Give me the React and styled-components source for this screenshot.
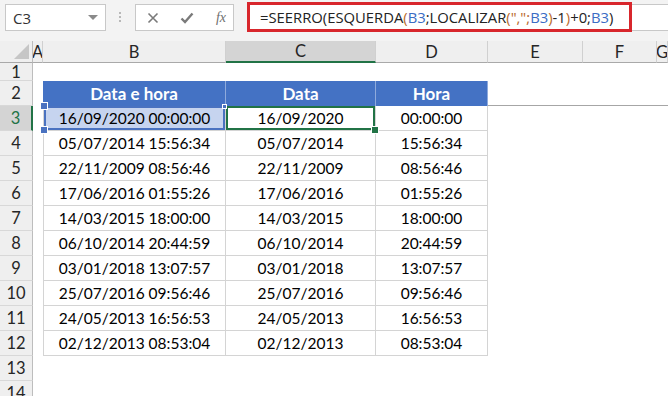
import React from 'react';
import styled, { createGlobalStyle } from 'styled-components';

const GlobalStyle = createGlobalStyle`
  html, body { margin: 0; padding: 0; background: #fff; }
  body {
    width: 668px;
    height: 396px;
    overflow: hidden;
    font-family: Lato, "Liberation Sans", sans-serif;
  }
`;

const TopBar = styled.div`
  display: flex;
  align-items: flex-start;
  height: 41px;
  box-sizing: border-box;
  padding-top: 4px;
  background: #f3f3f3;
`;

const NameBox = styled.div`
  margin-left: 5px;
  width: 101px;
  height: 27px;
  box-sizing: border-box;
  background: #fff;
  border: 1px solid #c8c8c8;
  display: flex;
  align-items: center;
  justify-content: space-between;
  padding: 0 7px 0 7px;
  font-family: "Open Sans", sans-serif;
  font-size: 15px;
  color: #333;
`;

const Caret = styled.span`
  width: 0;
  height: 0;
  border-left: 5px solid transparent;
  border-right: 5px solid transparent;
  border-top: 5px solid #8a8a8a;
`;

const Dots = styled.div`
  margin: 8px 0 0 13px;
  width: 3px;
  display: flex;
  flex-direction: column;
  gap: 2px;
  span {
    width: 2px;
    height: 2px;
    background: #b8b8b8;
  }
`;

const ButtonBox = styled.div`
  margin-left: 13px;
  width: 99px;
  height: 27px;
  box-sizing: border-box;
  background: #fff;
  border: 1px solid #c8c8c8;
  display: flex;
  align-items: center;
  justify-content: space-between;
  padding: 0 7px 0 11px;
  color: #777;
`;

const Fx = styled.span`
  font-family: "Liberation Serif", serif;
  font-style: italic;
  font-size: 14px;
  color: #6f6f6f;
`;

const FormulaBox = styled.div`
  margin: -2px 0 0 13px;
  width: 385px;
  height: 30px;
  box-sizing: border-box;
  border: 3px solid #d8262c;
  background: #fff;
  display: flex;
  align-items: center;
  padding-left: 10px;
  font-family: "Open Sans", sans-serif;
  font-size: 14.8px;
  color: #222;
  white-space: nowrap;
`;

const FormulaTail = styled.div`
  flex: 1;
  height: 27px;
  box-sizing: border-box;
  background: #fff;
  border-top: 1px solid #c8c8c8;
  border-bottom: 1px solid #c8c8c8;
`;

const Tok = styled.span`
  color: ${(p) => (p.$t === 'ref' ? '#3b6cc4' : p.$t === 'par' ? '#b9692c' : '#222')};
`;

const Sheet = styled.div`
  display: grid;
  grid-template-columns: 33px 10px 183px 150px 112px 95px 74px 1fr;
  grid-template-rows: 22px 18px repeat(13, 25px);
`;

const ColHead = styled.div`
  box-sizing: border-box;
  display: flex;
  align-items: center;
  justify-content: center;
  overflow: hidden;
  font-size: 16.5px;
  color: #262626;
  background: ${(p) => (p.$active ? '#d4d4d4' : '#efefef')};
  border-right: 1px solid #d0d0d0;
  border-bottom: ${(p) => (p.$active ? '2px solid #217346' : '1px solid #a9a9a9')};
`;

const Corner = styled.div`
  position: relative;
  box-sizing: border-box;
  background: #efefef;
  border-right: 1px solid #bdbdbd;
  border-bottom: 1px solid #a9a9a9;
  svg {
    position: absolute;
    right: 3px;
    bottom: 3px;
  }
`;

const RowHead = styled.div`
  box-sizing: border-box;
  display: flex;
  align-items: center;
  justify-content: center;
  font-size: 16.5px;
  color: ${(p) => (p.$active ? '#217346' : '#262626')};
  background: ${(p) => (p.$active ? '#d4d4d4' : '#efefef')};
  border-right: ${(p) => (p.$active ? '2px solid #217346' : '1px solid #bdbdbd')};
  border-bottom: 1px solid #d8d8d8;
`;

const Cell = styled.div`
  position: relative;
  box-sizing: border-box;
  display: flex;
  align-items: center;
  justify-content: center;
  white-space: nowrap;
  font-size: 15.5px;
  color: #000;
  ${(p) =>
    p.$kind === 'head' &&
    `
    background: #4472c4;
    color: #fff;
    font-weight: 700;
    font-size: 17px;
    border-right: 1px solid #8faadc;
  `}
  ${(p) =>
    p.$kind === 'data' &&
    `
    border-right: 1px solid #d4d4d4;
    border-bottom: 1px solid #d4d4d4;
  `}
  ${(p) => p.$first && 'border-left: 1px solid #d4d4d4;'}
  ${(p) => p.$rule && 'border-bottom: 1px solid #a6a6a6;'}
  ${(p) =>
    p.$sel === 'range' &&
    `
    background: #c6d4ef;
    box-shadow: inset 0 0 0 2px #4a72c0;
  `}
  ${(p) => p.$sel === 'active' && 'box-shadow: inset 0 0 0 2px #217346;'}
`;

const Handle = styled.span`
  position: absolute;
  z-index: 2;
  width: ${(p) => p.$size}px;
  height: ${(p) => p.$size}px;
  background: ${(p) => p.$color};
  border: 1px solid #fff;
  ${(p) => p.$pos}
`;

const rows = [
  ['16/09/2020 00:00:00', '16/09/2020', '00:00:00'],
  ['05/07/2014 15:56:34', '05/07/2014', '15:56:34'],
  ['22/11/2009 08:56:46', '22/11/2009', '08:56:46'],
  ['17/06/2016 01:55:26', '17/06/2016', '01:55:26'],
  ['14/03/2015 18:00:00', '14/03/2015', '18:00:00'],
  ['06/10/2014 20:44:59', '06/10/2014', '20:44:59'],
  ['03/01/2018 13:07:57', '03/01/2018', '13:07:57'],
  ['25/07/2016 09:56:46', '25/07/2016', '09:56:46'],
  ['24/05/2013 16:56:53', '24/05/2013', '16:56:53'],
  ['02/12/2013 08:53:04', '02/12/2013', '08:53:04'],
];

const formula = [
  ['=SEERRO(ESQUERDA', 'txt'],
  ['(', 'par'],
  ['B3', 'ref'],
  [';LOCALIZAR', 'txt'],
  ['(",";', 'par'],
  ['B3', 'ref'],
  [')', 'par'],
  ['-1', 'txt'],
  [')', 'par'],
  ['+0;', 'txt'],
  ['B3', 'ref'],
  [')', 'txt'],
];

const cols = ['A', 'B', 'C', 'D', 'E', 'F', 'G'];

function renderRow(r) {
  const cells = [];
  cells.push(
    <RowHead key={`h${r}`} $active={r === 3}>
      {r}
    </RowHead>
  );
  cols.forEach((c, i) => {
    const key = `${c}${r}`;
    const inTable = i >= 1 && i <= 3 && r >= 2 && r <= 12;
    if (!inTable) {
      cells.push(<Cell key={key} $rule={r === 2 && i >= 4} />);
      return;
    }
    if (r === 2) {
      cells.push(
        <Cell key={key} $kind="head">
          {['Data e hora', 'Data', 'Hora'][i - 1]}
        </Cell>
      );
      return;
    }
    const text = rows[r - 3][i - 1];
    const sel = r === 3 && i === 1 ? 'range' : r === 3 && i === 2 ? 'active' : undefined;
    cells.push(
      <Cell key={key} $kind="data" $first={i === 1} $sel={sel}>
        {text}
        {sel === 'range' && (
          <>
            <Handle $size={6} $color="#4a72c0" $pos="left: -4px; top: -4px;" />
            <Handle $size={6} $color="#4a72c0" $pos="left: -4px; bottom: -4px;" />
            <Handle $size={3} $color="#4a72c0" $pos="right: -2px; top: -2px;" />
          </>
        )}
        {sel === 'active' && <Handle $size={6} $color="#217346" $pos="right: -4px; bottom: -4px;" />}
      </Cell>
    );
  });
  return cells;
}

export default function App() {
  return (
    <>
      <GlobalStyle />
      <TopBar>
        <NameBox>
          C3
          <Caret />
        </NameBox>
        <Dots>
          <span />
          <span />
          <span />
        </Dots>
        <ButtonBox>
          <svg width="12" height="12" viewBox="0 0 12 12">
            <path d="M1.5 1.5 L10.5 10.5 M10.5 1.5 L1.5 10.5" stroke="#7a7a7a" strokeWidth="1.6" />
          </svg>
          <svg width="14" height="12" viewBox="0 0 14 12">
            <path d="M1.5 6.5 L5 10 L12.5 1.5" stroke="#7a7a7a" strokeWidth="2.4" fill="none" />
          </svg>
          <Fx>fx</Fx>
        </ButtonBox>
        <FormulaBox>
          {formula.map(([t, k], i) => (
            <Tok key={i} $t={k}>
              {t}
            </Tok>
          ))}
        </FormulaBox>
        <FormulaTail />
      </TopBar>
      <Sheet>
        <Corner>
          <svg width="15" height="15" viewBox="0 0 15 15">
            <polygon points="15,0 15,15 0,15" fill="#c6c6c6" />
          </svg>
        </Corner>
        {cols.map((c) => (
          <ColHead key={c} $active={c === 'C'}>
            {c}
          </ColHead>
        ))}
        {Array.from({ length: 14 }, (_, k) => renderRow(k + 1))}
      </Sheet>
    </>
  );
}
